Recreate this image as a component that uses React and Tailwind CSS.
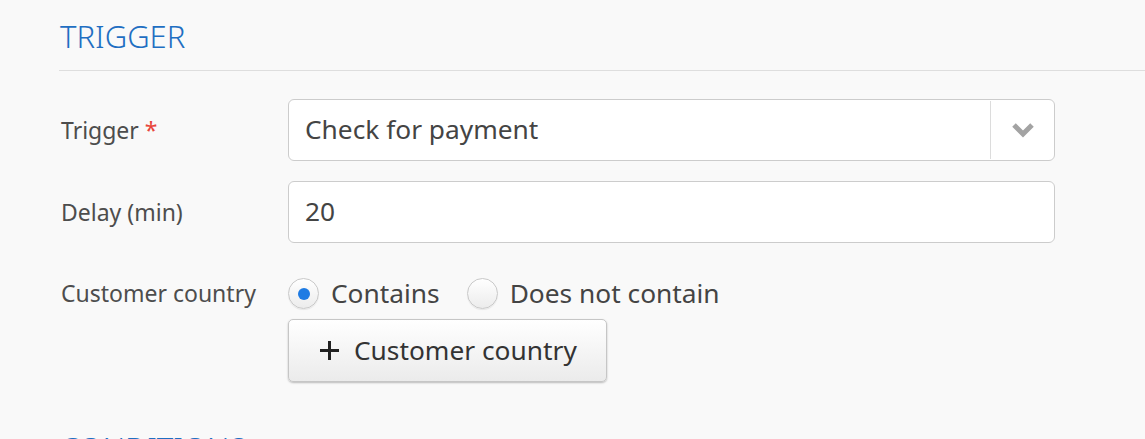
import React, { useState } from 'react';

const font = { fontFamily: '"Noto Sans", "Open Sans", sans-serif' };

const Chevron = () => (
  <svg width="24" height="16" viewBox="0 0 24 16" fill="none">
    <path d="M3 3l9 9 9-9" stroke="#a3a3a3" strokeWidth="5" strokeLinejoin="miter" />
  </svg>
);

const Plus = () => (
  <svg width="21" height="21" viewBox="0 0 21 21">
    <path d="M10.5 1v19M1 10.5h19" stroke="#222" strokeWidth="3" />
  </svg>
);

function Radio({ checked, label, onClick }) {
  return (
    <button type="button" onClick={onClick} className="flex items-center gap-3">
      <span className="w-[31px] h-[31px] rounded-full border border-[#c9c9c9] bg-gradient-to-b from-white to-[#ececec] shadow-[0_1px_1px_rgba(0,0,0,0.08)] flex items-center justify-center">
        {checked && <span className="w-[12px] h-[12px] rounded-full bg-[#1e7be3]" />}
      </span>
      <span className="text-[26.3px] leading-none text-[#444]">{label}</span>
    </button>
  );
}

export default function App() {
  const [mode, setMode] = useState('contains');

  return (
    <div className="min-h-screen bg-[#f9f9f9] pl-[59px] overflow-hidden" style={font}>

      {/* ── Trigger section ── */}
      <div className="pt-4 pb-[14px] border-b border-[#dedede]">
        <h2 className="text-[31px] leading-[40px] font-light text-[#1f6fc2] pl-px">TRIGGER</h2>
      </div>

      <div className="pt-[28px] w-[996px]">
        {/* Trigger select */}
        <div className="flex items-center">
          <label className="w-[229px] pl-[2px] text-[23px] text-[#4d4d4d]">
            Trigger <span className="text-[#e8463c]">*</span>
          </label>
          <div className="flex-1 h-[62px] flex items-stretch bg-white border border-[#cccccc] rounded-[6px]">
            <div className="flex-1 flex items-center pl-4 text-[26.3px] text-[#444]">Check for payment</div>
            <div className="w-[64px] border-l border-[#dcdcdc] my-[1px] flex items-center justify-center">
              <Chevron />
            </div>
          </div>
        </div>

        {/* Delay */}
        <div className="flex items-center mt-[20px]">
          <label className="w-[229px] pl-[2px] text-[23px] text-[#4d4d4d]">Delay (min)</label>
          <div className="flex-1 h-[62px] flex items-center bg-white border border-[#cccccc] rounded-[6px] pl-4 text-[26.3px] text-[#444]">
            20
          </div>
        </div>

        {/* Customer country */}
        <div className="flex items-start mt-[35px]">
          <label className="w-[229px] pl-[2px] h-[31px] flex items-center text-[23px] text-[#4d4d4d]">Customer country</label>
          <div className="flex flex-col items-start">
            <div className="flex items-center gap-[27px] h-[31px]">
              <Radio checked={mode === 'contains'} label="Contains" onClick={() => setMode('contains')} />
              <Radio checked={mode === 'not'} label="Does not contain" onClick={() => setMode('not')} />
            </div>
            <button
              type="button"
              className="mt-[10px] h-[63px] w-[319px] flex items-center gap-[14px] pl-[30px] bg-gradient-to-b from-white to-[#ebebeb] border border-[#c6c6c6] rounded-[5px] shadow-[0_1px_2px_rgba(0,0,0,0.25)] text-[26.3px] text-[#333]"
            >
              <Plus />
              Customer country
            </button>
          </div>
        </div>
      </div>

      {/* ── Conditions section ── */}
      <div className="pt-[46px] pb-4">
        <h2 className="text-[31px] leading-[40px] font-light text-[#1f6fc2] pl-px">CONDITIONS</h2>
      </div>
    </div>
  );
}
